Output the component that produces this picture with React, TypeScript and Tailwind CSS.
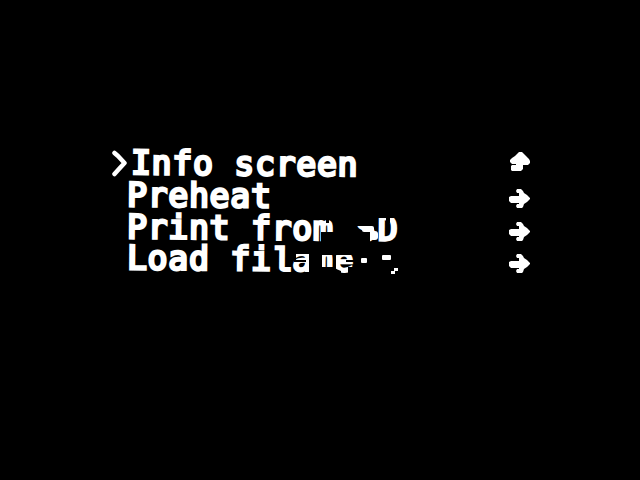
const ROW =
  "flex h-8 w-[422px] items-center justify-between whitespace-pre";
const LABEL =
  "origin-left rotate-[0.5deg] text-[33px] leading-6 tracking-[0.8px] [-webkit-text-stroke:2.7px_white] [stroke-linejoin:round]";

function Arrow({ up = false }: { up?: boolean }) {
  return (
    <svg width="22" height="24" viewBox="0 0 22 24" fill="white">
      {up ? (
        <path d="M10 1h3l2 2 2 2 3 3 1 2v2l-2 2h-5v4l-2 2H3l-1-1v-4l1-1h4v-1H3l-2-2V9l2-2 3-2Z" />
      ) : (
        <path d="M8 3h4l2 2 1 2 3 2 3 3v1l-3 3-3 2-1 3-1 1H8l-1-2 1-2h2v-1H2l-2-2v-4l2-1h8V7H8L7 5Z" />
      )}
    </svg>
  );
}

/* Burnt-out areas over the menu text, and a few stuck pixels inside them. */
function DeadPixels() {
  return (
    <svg className="pointer-events-none absolute left-0 top-0" width="640" height="480" viewBox="0 0 640 480">
      <g fill="black">
        <path d="M321 232h15v13h-15ZM326 218h3v5h-3ZM333 218h5v7h-5Z" />
        <path d="M355 212h23v14h-23ZM355 232h15v12h-15Z" />
        <path d="M376 212h27v6h-27ZM386 217h4v6h-4Z" />
        <path d="M292 246h21v8h-21ZM294 260h12v2h-12ZM292 252h4v8h-4ZM309 252h4v24h-4Z" />
        <path d="M309 246h13v30h-13ZM320 267h16v9h-16ZM333 254h3v16h-3Z" />
        <path d="M320 246h36v9h-36ZM334 268l7 3v6h-7ZM348 267h8v10h-8ZM346 260h10v2h-10Z" />
        <path d="M354 246h50v32h-50Z" />
      </g>
      <g fill="white">
        <rect x="362" y="226" width="12" height="6" rx="2" />
        <rect x="370" y="231" width="8" height="9" rx="3" />
        <rect x="361" y="258" width="6" height="5" rx="1" />
        <rect x="382" y="255" width="9" height="5" rx="1" />
        <rect x="394" y="268" width="4" height="3" />
        <rect x="391" y="271" width="4" height="3" />
      </g>
    </svg>
  );
}

export default function App() {
  return (
    <main className="relative h-[480px] w-[640px] overflow-hidden bg-black pl-[109px] pt-[147px] font-['DejaVu_Sans_Mono',monospace] text-white">
      <div className={ROW}>
        <span className="flex items-center">
          <svg width="22" height="28" viewBox="0 0 22 28" fill="none" stroke="white" strokeWidth="4.500" strokeLinecap="round" strokeLinejoin="round">
            <path d="M5.500 4L9 7L15.500 14L10 20L5.500 25" />
          </svg>
          <span className={LABEL}>Info screen</span>
        </span>
        <Arrow up />
      </div>
      <div className={ROW}>
        <span className={LABEL + " pl-[18px]"}>Preheat</span>
        <span className="pt-1.5">
          <Arrow />
        </span>
      </div>
      <div className={ROW}>
        <span className={LABEL + " pl-[18px]"}>
          Print from<span className="tracking-[2.2px]"> SD</span>
        </span>
        <span className="pt-2">
          <Arrow />
        </span>
      </div>
      <div className={ROW}>
        <span className={LABEL + " pl-[18px]"}>
          Load fi<span className="font-['Liberation_Mono',monospace]">l</span>ament
        </span>
        <span className="pt-2">
          <Arrow />
        </span>
      </div>
      <DeadPixels />
    </main>
  );
}
